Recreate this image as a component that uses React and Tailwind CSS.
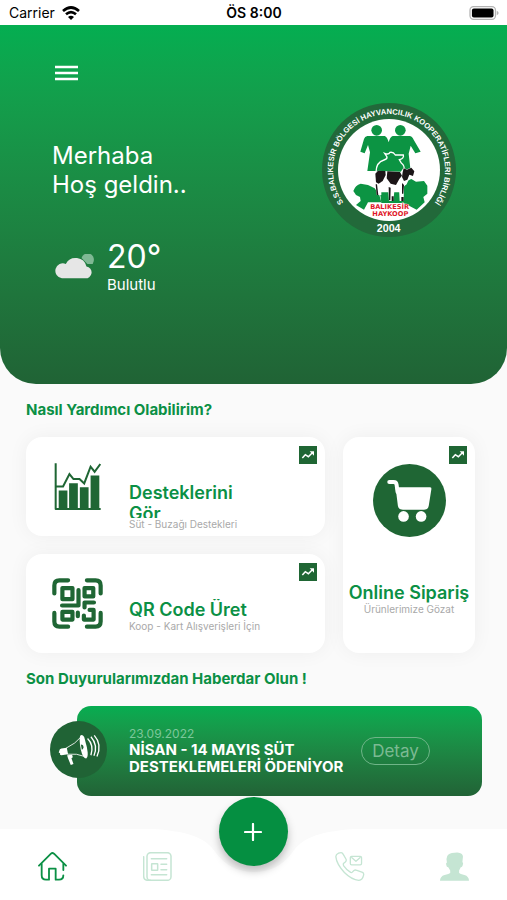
import { useState } from "react";

const LIGHT = "#c5e5d3";
const DARK = "#1f6634";

function StatusBar() {
  return (
    <div className="grid h-[25px] grid-cols-3 items-center bg-white pr-2 pl-[9px] text-sm text-black">
      <div className="flex items-center gap-[7px]">
        <span>Carrier</span>
        <svg viewBox="0 0 54 42" className="h-[14px] w-[18px]" fill="none" stroke="#000" strokeWidth="8">
          <path d="M3 15 Q27 -6 51 15" />
          <path d="M12 25 Q27 12 42 25" />
          <path d="M27 42 L18 33 Q27 25 36 33Z" fill="#000" stroke="none" />
        </svg>
      </div>
      <div className="text-center font-semibold">ÖS 8:00</div>
      <svg viewBox="0 0 92 44" className="h-[14px] w-[30px] justify-self-end">
        <rect x="2" y="2" width="80" height="40" rx="11" fill="#fff" stroke="#b3b3b3" strokeWidth="4" />
        <rect x="8" y="8" width="68" height="28" rx="6" fill="#000" />
        <path d="M86 15 Q92 18 92 22 Q92 26 86 29Z" fill="#b3b3b3" />
      </svg>
    </div>
  );
}

function Logo() {
  return (
    <svg viewBox="0 0 402 402" className="h-[134px] w-[134px]" role="img">
      <defs>
        <path id="ring" d="M82 320 A168 168 0 1 1 320 320" />
      </defs>
      <circle cx="201" cy="201" r="201" fill="#22693a" />
      <circle cx="201" cy="201" r="153" fill="#fff" />
      <text
        fill="#fff"
        fontSize="23"
        fontWeight="700"
        fontFamily="'Liberation Sans Narrow', 'Liberation Sans', sans-serif"
        textAnchor="middle"
      >
        <textPath href="#ring" startOffset="50%">
          S.S.BALIKESİR BÖLGESİ HAYVANCILIK KOOPERATİFLERİ BİRLİĞİ
        </textPath>
      </text>
      <g transform="translate(54 36)">
        <g fill="#0c9443">
          <circle cx="110" cy="46" r="16" />
          <circle cx="181" cy="46" r="16" />
          <path d="M82 63 H134 Q142 66 146 82 Q150 66 158 63 H208 Q217 64 221 74 L242 110 L226 115 L212 92 L206 116 L212 168 H186 L148 130 L118 168 H82 L90 112 L84 90 L74 115 L61 110 L72 72 Q74 64 82 63Z" />
          <path d="M40 228 Q46 210 62 206 L84 210 L104 220 L118 240 L124 262 H84 L72 284 L48 270 L62 258 L60 246 L48 240Z" />
          <path d="M120 232 H188 L196 200 L214 192 L228 200 L252 198 L262 212 L262 236 L250 246 L254 262 L230 284 L210 274 L190 264 H124Z" />
        </g>
        <path
          d="M108 172 Q108 142 132 135 Q142 132 141 126 L134 115 Q146 120 150 112 Q160 110 166 120 L190 120 Q193 130 178 134 L184 144 Q196 152 192 172Z"
          fill="#0c9443"
          stroke="#fff"
          strokeWidth="4"
        />
        <path
          d="M105 176 L113 167 L182 171 L190 159 L201 163 L213 158 L223 169 L220 184 L208 190 L200 208 L192 214 L191 258 H179 L177 220 L164 220 L160 258 H147 L144 222 L130 212 L124 218 V240 H110 L107 210Z"
          fill="#fff"
        />
        <g fill="#1b1517">
          <path d="M106 176 L114 167 L136 168 L137 180 L128 198 L116 206 L108 202Z" />
          <path d="M142 169 L180 171 L186 182 L178 192 L168 210 L152 206 L140 190Z" />
          <path d="M188 172 L191 160 L201 164 L214 158 L223 169 L219 183 L208 179 L202 194 L192 198 L186 186Z" />
          <path d="M107 208 H111 L115 240 H110Z M146 216 L152 218 L151 256 H147Z M186 204 L192 210 L190 236 L186 236Z M184 246 H191 V258 H184Z M155 244 H161 V258 H155Z" />
        </g>
      </g>
      <g
        fill="#e0182a"
        fontSize="20"
        fontWeight="700"
        fontFamily="'DejaVu Sans', 'Liberation Sans', sans-serif"
        textAnchor="middle"
        stroke="#fff"
        strokeWidth="2"
        paintOrder="stroke"
      >
        <text x="203" y="317">BALIKESİR</text>
        <text x="205" y="338">HAYKOOP</text>
      </g>
      <text
        x="200"
        y="388"
        fill="#fff"
        fontSize="32"
        fontWeight="700"
        fontFamily="'Liberation Sans', sans-serif"
        textAnchor="middle"
      >
        2004
      </text>
    </svg>
  );
}

function Header() {
  return (
    <header className="flex justify-between rounded-b-[36px] bg-linear-to-b from-[#04ae51] to-[#206335] pt-9 pr-[51px] pb-[90px] pl-[52px] text-white">
      <div>
        <button type="button" aria-label="Menü" className="flex h-6 w-7 items-center justify-center">
          <svg viewBox="0 0 23 16" className="h-4 w-[23px]" stroke="#fff" strokeWidth="2.6">
            <path d="M0 2 H23 M0 8 H23 M0 14 H23" />
          </svg>
        </button>
        <h1 className="mt-14 text-2xl leading-[29px]">
          Merhaba
          <br />
          Hoş geldin..
        </h1>
        <div className="mt-[39px] flex items-center">
          <svg viewBox="0 0 122 76" className="mr-[13px] ml-[2px] h-[25px] w-10">
            <path d="M84 12 A18 18 0 0 1 121 22 L118 30 H102Z" fill="#7fb894" />
            <path d="M24 74 A23 23 0 1 1 36 30 A34 34 0 0 1 99 38 A18 18 0 0 1 94 74Z" fill="#e6e6e6" />
          </svg>
          <div>
            <div className="text-[32px] leading-[38px]">20°</div>
            <div className="text-[15px] leading-[18px]">Bulutlu</div>
          </div>
        </div>
      </div>
      <div className="pt-[42px]">
        <Logo />
      </div>
    </header>
  );
}

function Badge() {
  return (
    <svg viewBox="0 0 54 54" className="absolute top-[9px] right-2 h-[18px] w-[18px]">
      <rect width="54" height="54" fill={DARK} />
      <path d="M10 36 L19 26 L28 32 L40 20" fill="none" stroke="#fff" strokeWidth="4.5" />
      <path d="M32 16 H45 V29Z" fill="#fff" />
    </svg>
  );
}

function ChartIcon() {
  return (
    <svg viewBox="0 0 140 140" className="h-[47px] w-[47px]" fill="none" stroke={DARK} strokeWidth="6">
      <path d="M5 1 V137 H139" strokeLinejoin="round" />
      <path d="M5 70 H27 L46 33 L58 48 H76 L90 61 L109 11 L121 26 L138 3" />
      <path
        d="M14 82 H40 V134 H14Z M45 60 H71 V134 H45Z M77 72 H103 V134 H77Z M109 37 H135 V134 H109Z"
        fill={DARK}
        stroke="none"
      />
    </svg>
  );
}

function QrIcon() {
  return (
    <svg
      viewBox="0 0 152 152"
      className="h-[51px] w-[51px]"
      fill="none"
      stroke={DARK}
      strokeWidth="12.5"
      strokeLinecap="round"
      strokeLinejoin="round"
    >
      <path d="M7 46 V22 Q7 7 22 7 H48 M104 7 H130 Q145 7 145 22 V46 M7 104 V130 Q7 145 22 145 H48 M104 145 H130 Q145 145 145 130 V104" />
      <path d="M31 30 H61 V63 H31Z M97 30 H123 V55 H97Z M31 101 H61 V124 H31Z" />
      <path d="M79 36 V82 H30 M77 103 V114" />
      <path d="M125 73 H97 V88 M112 95 H124 V124 H95 V112" />
    </svg>
  );
}

function CartIcon() {
  return (
    <svg viewBox="0 0 220 220" className="h-[73px] w-[73px]">
      <circle cx="110" cy="110" r="110" fill={DARK} />
      <path d="M49 54 H62 Q70 54 71 62 L74 84" fill="none" stroke="#fff" strokeWidth="12" strokeLinecap="round" />
      <path d="M68 70 H172 Q177 70 176 75 L168 126 Q166 138 154 138 H90 Q77 138 75 126Z" fill="#fff" />
      <circle cx="92" cy="158" r="16" fill="#fff" />
      <circle cx="145" cy="158" r="16" fill="#fff" />
    </svg>
  );
}

function WideCard({ icon, title, text }) {
  return (
    <a href="#" className="relative flex h-[99px] rounded-2xl bg-white shadow-[0_0_20px_rgba(0,0,0,0.05)]">
      <div className="flex w-[103px] shrink-0 items-center justify-center">{icon}</div>
      <div className="w-[130px] pt-[45px]">
        <h3 className="max-h-9 overflow-hidden text-lg leading-[21px] font-semibold text-[#0b9045]">{title}</h3>
        <p className="text-[10px] leading-3 whitespace-nowrap text-[#a9a9a9]">{text}</p>
      </div>
      <Badge />
    </a>
  );
}

function MegaphoneIcon() {
  return (
    <svg viewBox="0 0 170 170" className="h-[57px] w-[57px]">
      <circle cx="85" cy="85" r="85" fill="#206335" />
      <path d="M28 88 Q28 83 34 82 L50 80 L54 99 L34 102 Q28 102 30 96 L26 94Z" fill="#fff" />
      <path d="M48 81 Q76 68 94 46 M52 99 Q80 96 104 106" fill="none" stroke="#fff" strokeWidth="2.5" />
      <path d="M90 44 Q96 38 102 48 L110 78 Q116 108 108 112 Q98 112 92 86 Q86 56 90 44Z" fill="#fff" />
      <path d="M92 70 Q100 70 100 79 Q99 85 95 86Z" fill="#206335" />
      <path d="M51 102 L66 101 L68 108 L64 111 L70 128 L62 131 L54 112Z" fill="#fff" />
      <path
        d="M112 52 Q132 72 122 102 M122 47 Q144 72 131 104 M132 43 Q156 70 140 106"
        fill="none"
        stroke="#fff"
        strokeWidth="4"
      />
    </svg>
  );
}

function Announcement({ date, title }) {
  return (
    <article className="mr-[25px] ml-[50px] flex h-[90px] items-center">
      <div className="z-10 -mt-1 -mr-[30px] shrink-0">
        <MegaphoneIcon />
      </div>
      <div className="flex h-full flex-1 items-center rounded-[14px] bg-linear-to-b from-[#06ad51] to-[#216336] pl-[52px]">
        <div className="w-[232px]">
          <time className="block text-xs leading-[14px] text-[#7cc79a]">{date}</time>
          <h3 className="text-[15px] leading-[17px] font-bold text-white">{title}</h3>
        </div>
        <button
          type="button"
          className="h-7 w-[69px] rounded-full border border-[#6fb588] text-[17px] leading-none text-[#7cba93]"
        >
          Detay
        </button>
      </div>
    </article>
  );
}

function HomeIcon({ color }) {
  return (
    <svg viewBox="0 0 87 87" className="h-[29px] w-[29px]" fill="none" stroke={color} strokeWidth="5.5" strokeLinecap="round" strokeLinejoin="round">
      <path d="M3 41 L39 5 Q43 1 48 5 L84 41" />
      <path d="M11 36 V70 Q11 83 24 83 H33 V50 H53 V83 H63 Q76 83 76 70 M76 36 V54" />
    </svg>
  );
}

function NewsIcon({ color }) {
  return (
    <svg viewBox="0 0 87 87" className="h-[29px] w-[29px]" fill="none" stroke={color} strokeWidth="4.5" strokeLinecap="round">
      <rect x="12" y="2" width="72" height="83" rx="11" />
      <path d="M2 14 V72 Q2 85 15 85 H22" />
      <path d="M25 20 H71 M54 37 H71 M54 53 H71 M25 68 H71" />
      <rect x="26" y="35" width="18" height="20" rx="1" />
    </svg>
  );
}

function PhoneIcon({ color }) {
  return (
    <svg viewBox="0 0 90 88" className="h-[29px] w-[30px]" fill="none" stroke={color} strokeWidth="4" strokeLinejoin="round">
      <path d="M4 8 Q10 2 18 2 Q22 2 25 8 L33 22 Q35 27 30 31 L25 35 Q24 38 26 42 Q34 54 47 62 Q50 63 52 61 L57 56 Q61 53 66 56 L83 62 Q88 65 86 71 Q83 85 72 86 Q50 84 28 62 Q4 36 2 14Z" />
      <rect x="46" y="13" width="34" height="26" rx="4" />
      <path d="M49 16 L63 28 L77 16" />
    </svg>
  );
}

function PersonIcon({ color }) {
  return (
    <svg viewBox="0 0 88 87" className="h-[29px] w-[29px]" fill={color}>
      <path d="M22 12 Q26 3 44 2 Q54 0 62 3 Q72 6 69 20 L68 30 Q72 32 69 40 Q67 47 63 46 L58 56 V63 Q61 66 74 69 Q88 73 88 87 H0 Q0 73 14 69 Q28 66 31 63 V56 L25 46 Q20 46 19 39 Q17 32 21 31 Q18 20 22 12Z" />
    </svg>
  );
}

const tabs = [
  { id: "home", label: "Ana Sayfa", Icon: HomeIcon },
  { id: "news", label: "Duyurular", Icon: NewsIcon },
  { id: "add", label: "Ekle" },
  { id: "contact", label: "İletişim", Icon: PhoneIcon },
  { id: "profile", label: "Profil", Icon: PersonIcon },
];

function TabBar() {
  const [active, setActive] = useState("home");

  return (
    <nav className="relative grid h-[71px] grid-cols-[6fr_6fr_5fr_6fr_6fr] items-center justify-items-center bg-white">
      {/* dip in the bar under the add button */}
      <svg viewBox="0 0 200 44" className="absolute top-0 left-1/2 h-11 w-[200px] -translate-x-1/2">
        <path d="M0 0 C40 3 52 10 62 24 Q76 43 100 43 Q124 43 138 24 C148 10 160 3 200 0Z" fill="#fafafa" />
      </svg>
      {tabs.map(({ id, label, Icon }) =>
        Icon ? (
          <button key={id} type="button" aria-label={label} className="mt-[3px]" onClick={() => setActive(id)}>
            <Icon color={active === id ? "#0b9045" : LIGHT} />
          </button>
        ) : (
          <button
            key={id}
            type="button"
            aria-label={label}
            className="relative -mt-[66px] flex h-[69px] w-[69px] items-center justify-center rounded-full bg-[#058f41] shadow-[0_5px_8px_rgba(0,0,0,0.25)]"
          >
            <svg viewBox="0 0 18 18" className="h-[18px] w-[18px]" stroke="#fff" strokeWidth="2.2" strokeLinecap="round">
              <path d="M9 1 V17 M1 9 H17" />
            </svg>
          </button>
        )
      )}
    </nav>
  );
}

export default function App() {
  return (
    <div className="flex min-h-screen flex-col bg-[#fafafa] font-['Inter',sans-serif]">
      <StatusBar />
      <Header />
      <main className="flex-1 pt-4 pb-8">
        <section className="pr-8 pl-[26px]">
          <h2 className="text-[15px] leading-5 font-bold text-[#0b9045]">Nasıl Yardımcı Olabilirim?</h2>
          <div className="mt-[17px] grid grid-cols-[1fr_132px] gap-[18px]">
            <div className="flex flex-col gap-[18px]">
              <WideCard icon={<ChartIcon />} title="Desteklerini Gör" text="Süt - Buzağı Destekleri" />
              <WideCard icon={<QrIcon />} title="QR Code Üret" text="Koop - Kart Alışverişleri İçin" />
            </div>
            <a
              href="#"
              className="relative flex flex-col items-center rounded-2xl bg-white pt-[27px] shadow-[0_0_20px_rgba(0,0,0,0.05)]"
            >
              <CartIcon />
              <h3 className="mt-[45px] text-lg leading-[21px] font-semibold whitespace-nowrap text-[#0b9045]">
                Online Sipariş
              </h3>
              <p className="text-[10px] leading-3 text-[#a9a9a9]">Ürünlerimize Gözat</p>
              <Badge />
            </a>
          </div>
        </section>
        <section className="mt-4">
          <h2 className="mb-[17px] pl-[26px] text-[15px] leading-5 font-bold text-[#0b9045]">
            Son Duyurularımızdan Haberdar Olun !
          </h2>
          <Announcement date="23.09.2022" title="NİSAN - 14 MAYIS SÜT DESTEKLEMELERİ ÖDENİYOR" />
        </section>
      </main>
      <TabBar />
    </div>
  );
}
